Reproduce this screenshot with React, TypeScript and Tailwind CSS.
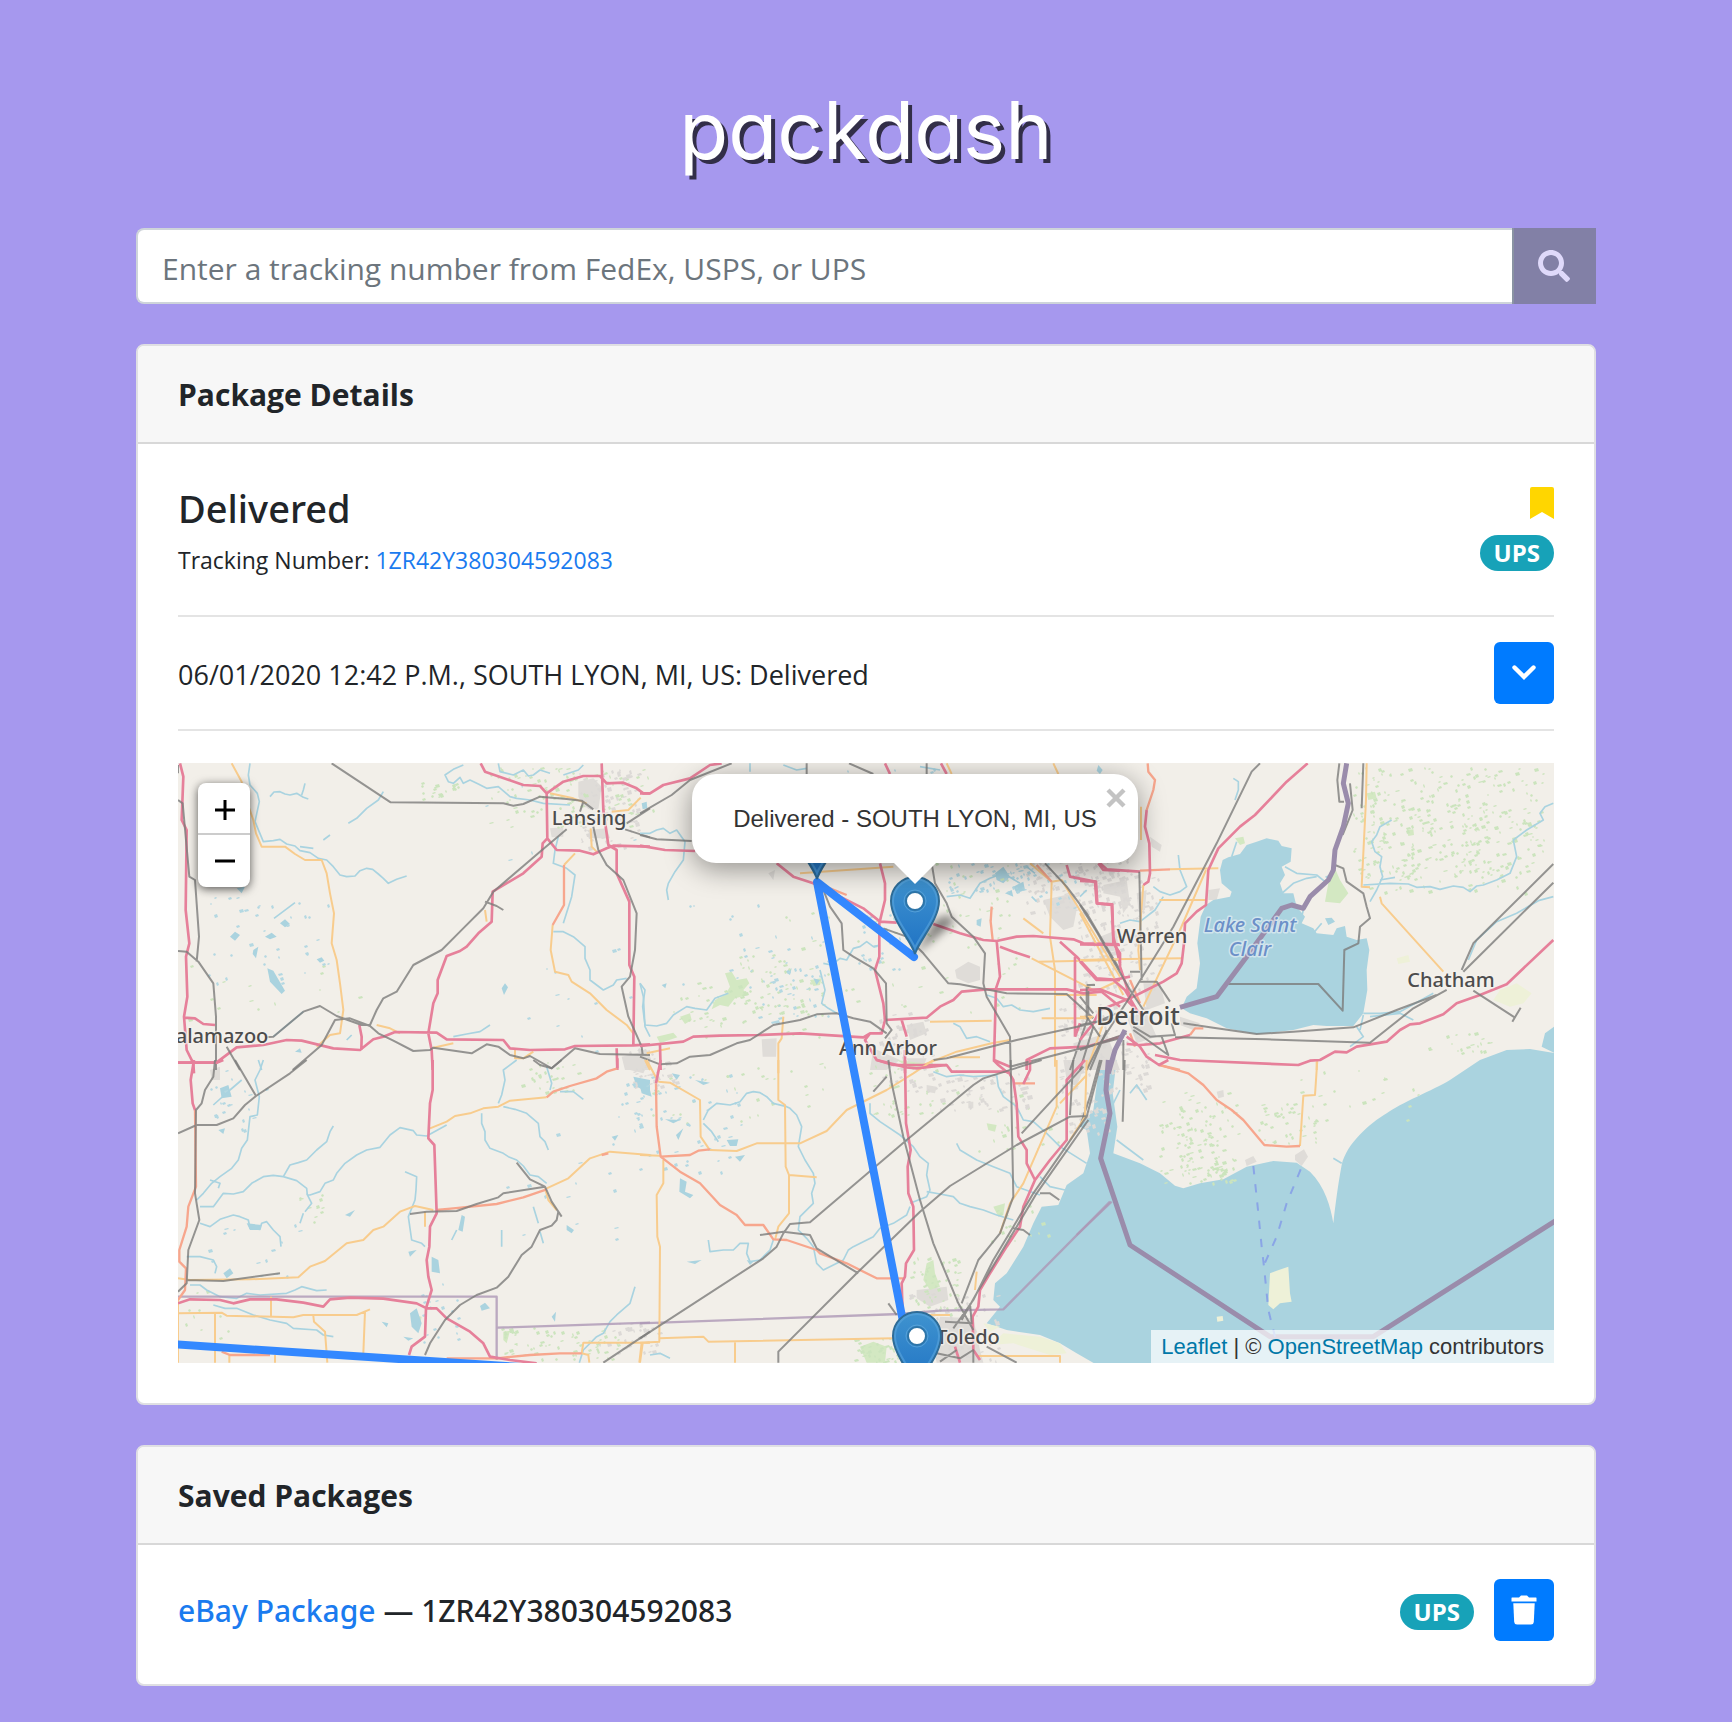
import React from "react";
import { FaSearch } from "react-icons/fa";

type Tile = {
  id: string;
  x: number;
  y: number;
  water?: string;
  lakes?: string;
  park?: string;
  field?: string;
  urban?: string;
  river?: string;
  minor?: string;
  trunk?: string;
  motorway?: string;
  rail?: string;
  border?: string;
  nation?: string;
  ferry?: string;
};

// Each tile is drawn on a grid three times finer than the map surface.
const TILES: Tile[] = [
  {
    id: "southeast",
    x: 902,
    y: 297,
    water:
      "M60 0L40 150L0 200L20 210L30 280L10 340L-40 375L-65 435L-115 440L-140 490L-170 560L-220 640L-255 670L-260 720L-240 740L-280 790L-220 810L-120 825L-60 850L-10 880L60 920H1430V-20L1350 -33L1280 -30L1200 0L1110 60C1060 90 960 130 920 160C870 190 800 250 785 315C775 370 768 420 760 490C752 440 735 380 690 335L650 308L580 303L500 320L430 358L360 370L310 385L285 377L240 340L180 310L100 280L112 200L98 100L110 0ZM1422 -100L1395 -80L1385 -40L1422 -22Z",
    field: "M570 640L590 632L625 620L630 700L635 725L600 730L580 748L565 735ZM410 770L428 768L430 782L412 785Z",
    urban: "M495 300L520 288L530 305L500 318ZM645 285L672 268L684 290L665 318L645 300ZM410 95L430 90L432 110L415 115Z",
    river: "M150 100L170 75L200 120M110 240L150 270L190 300M120 90L100 130M760 295L785 310",
    minor: "M660 258L670 107L705 105L712 0",
    trunk: "M240 15L325 40L370 75L410 120L455 150L490 180L553 255L620 260L660 258",
    rail: "M134 0L128 185M60 0L30 110L0 200",
    border: "M-10 525L95 425",
    nation: "M85 0L78 90L90 160L62 295L150 555L570 830H880L1430 480",
    ferry: "M520 318L533 440L545 560L552 620L565 750L585 830M662 328L620 430L590 530L552 615",
  },
  {
    id: "northwest",
    x: -8,
    y: -13,
    lakes:
      "M292 655L310 662L345 722L335 732L300 695ZM330 520L345 508L360 522L345 532ZM180 560L195 545L210 555L195 572ZM285 560L305 548L320 560L300 568ZM440 628L455 622L463 632L450 638ZM995 715L1005 700L1014 712L1002 735ZM200 415L225 410L215 430ZM250 600L265 590L258 625L248 612ZM375 905L390 895L395 908Z",
    urban:
      "M1225 95L1270 85L1295 110L1285 180L1240 170L1225 140ZM1140 235L1180 232L1180 260L1145 262ZM1250 240L1310 235L1320 265L1270 265ZM1355 920L1440 900L1440 960H1365Z",
    river:
      "M240 40L235 75L240 105L262 130L268 155L255 215L280 275L310 272L330 268L350 282L375 288L390 302L420 308L445 325L470 330L490 350L510 375L530 380L555 378L570 362L590 355L608 358L625 372L640 385L655 400L680 388L710 378M300 140L312 126L330 125L345 132L360 135L380 130L400 142L415 147M405 100L400 120L395 135M640 125L625 150L590 175L560 205L535 220M880 45L850 58L825 75L835 95L850 100L870 82L880 100L900 90L925 102L950 115L985 110L1020 140L1040 145L1080 150L1120 160L1200 165M985 40L990 65L1030 75L1060 60L1075 78L1090 75L1110 60L1140 70M1180 75L1225 60L1240 45M1165 260L1155 300L1150 340L1190 355L1215 375L1205 440L1180 520M1150 545L1180 545L1210 560L1245 590L1245 625L1260 660L1260 690L1300 720L1330 705L1340 690L1370 685M1410 700L1420 740L1425 830L1440 860M312 505L375 458M310 860L400 785M850 860L890 852L930 845L960 825M460 270L480 255M390 290L430 295M530 870L545 855M265 930L275 960",
    minor:
      "M185 40L215 95L225 140L250 210L258 250L275 290L345 290L375 312L405 330L455 330L470 370L480 430L492 490L485 580L500 630L510 700L520 780L510 850L480 855L440 890M1325 185L1375 180L1412 143M1140 130L1210 145L1250 160M1148 525L1142 600L1155 665L1195 675L1205 695L1260 730L1310 780L1370 825L1390 850M1262 235L1265 290L1285 310M945 480L950 515M620 825L660 835L690 850M790 893L850 880M1215 310L1182 345M1035 900V925L1060 925L1090 905",
    trunk: "M1182 345V465L1148 525",
    motorway:
      "M30 40L40 80L35 210L50 240L47 480L58 580L48 620L52 740L42 800L50 900L70 940L72 970M42 803L75 805L100 822L135 825M24 938L140 937L200 892L280 885L350 870L395 872L490 895L570 900L610 868L640 860L675 846L800 848L830 868L1000 870L1020 895L1080 900L1185 898L1215 888L1390 886L1440 883M568 825L575 860L574 900M932 40L945 65L1060 105L1110 108L1130 130L1180 95L1240 78L1290 78L1310 100L1360 98L1400 115L1420 130L1440 130M1130 130L1132 265L1160 300L1230 302L1270 313L1310 295L1330 287L1440 290M1295 40L1300 180L1315 285L1340 300L1340 370L1378 455L1378 645L1393 680L1390 886M1132 265L1118 280L1115 320L1060 370L968 425L965 515L925 550L890 590L870 603L830 618L803 690L803 730L790 760L775 850L785 900L788 960M1340 895L1342 960",
    rail:
      "M485 40L662 157L1000 160L1030 167L1060 162L1110 140L1190 147L1235 152L1270 178M1270 230L1285 300L1310 345L1360 390L1400 490L1395 600L1380 680L1355 710L1375 800L1415 890L1418 915M1190 238L1110 305L1075 335L970 425L940 475L870 545L815 600L730 645L680 725L640 745L620 780L600 825L575 825L500 798L450 768L400 785L310 860L285 862M945 455L980 468L1000 480M24 45V70M24 150L38 160L58 380L75 390L87 560L80 635M24 603L50 605L85 635L130 700L138 800L138 960M170 890L210 960M368 960L455 885L495 810L540 805L600 828L625 850L670 872L730 903L780 900L790 893L905 910L950 883L985 890L1020 915L1060 925L1080 918L1145 955L1215 895L1290 912L1440 915M1440 175L1370 220M1365 238L1440 262M1240 155L1230 185",
  },
  {
    id: "north",
    x: 462,
    y: -13,
    lakes:
      "M1065 370L1090 350L1110 380L1090 400L1070 390ZM1120 410L1150 395L1155 420L1130 430ZM1095 430L1115 420L1120 440ZM5 160L20 155L22 175L8 178ZM65 705L80 700L76 715ZM435 665L455 655L450 675ZM1010 510L1025 505L1022 530L1010 525ZM1375 45L1388 60L1380 72L1370 62ZM520 685L540 690L530 705Z",
    park: "M255 670L275 665L290 690L320 685L328 700L310 720L325 735L285 745L265 770L240 765L215 778L225 750L255 735L270 710ZM50 860L100 848L112 862L60 880ZM120 800L150 790L155 810L135 822ZM510 690L545 685L540 705L520 708Z",
    urban:
      "M365 868L410 865L408 920H368ZM945 660L985 635L1020 650L1020 690L985 700L950 685ZM1210 450L1300 430L1310 480L1300 530L1270 540L1230 500ZM800 825L850 815L860 850L810 870ZM385 370L405 360L400 390ZM700 895L780 930L740 960H690ZM1300 880L1400 850L1440 960H1310Z",
    river:
      "M0 250L30 250L50 240L70 235L90 250L110 240L135 275L130 330L105 365L85 400L80 420L85 450M0 700L15 720L8 770L15 825L50 828L80 820L100 795L140 770L165 775L200 780L225 745L265 730M540 660L555 720L545 760L565 775L590 790M920 440L960 435L990 445L1020 400L1050 385L1090 370L1115 385L1140 400M1040 735L1070 745L1090 770L1115 765L1140 780L1180 785L1230 775M550 640L575 645L600 625L620 630L640 595L660 590L680 575L700 590L720 585M940 820L960 830L980 865L1010 860L1050 875M1160 350L1185 370M330 40V65M430 45L470 60L500 55M840 50L900 60M1175 440L1190 455",
    minor:
      "M480 370L760 350M920 40L935 72M1240 40L1255 72M1170 340L1235 395L1230 560L1245 660V950M1235 395L1265 390L1440 680M1195 635L1440 630M1175 625L1370 725M870 815L1055 812M1205 805H1355M430 800L425 865L415 880V970M850 945L950 905L1055 880L1110 870M930 922H1020M20 910L90 895M1150 505L1210 550M1440 690L1375 720M1245 735H1370",
    trunk: "M1055 470L1052 515L1058 570M1190 345L1235 395M570 415L620 435",
    motorway:
      "M0 130L30 130L70 105L150 85L210 45L245 40M0 287L75 300L165 303M410 340L460 380L520 400L600 440L670 475L720 515L770 518M720 340L735 400L735 450L718 520L718 620L705 660L730 760L735 810L725 850L690 850L670 862L480 850L360 855L240 857L160 860L130 875L0 888M735 40L750 72M903 40L920 72M880 522L960 550L1030 570L1070 573L1130 560L1180 558L1300 568L1330 580L1440 583M1070 573L1080 680L1068 715L1062 930L1110 950M1080 590L1120 605L1170 622M1280 345L1290 380L1365 395L1370 460L1415 465L1420 560L1440 640M1375 340L1390 360L1440 362M1260 575L1310 620L1370 685L1440 690M1305 620V860M735 810L860 803L900 770L940 750L965 725L1040 718L1280 718L1330 730L1385 725L1440 770M690 850L675 870L710 930L760 945L800 945L920 945M785 810L800 860M795 900V970M60 885L62 960M1305 860L1320 820M1440 860L1340 890L1230 895L1160 930V960",
    rail:
      "M0 190L95 135L150 90L275 40M500 40V72M627 40L700 72M860 40V72M0 255L50 268L155 273M875 340L885 400L920 460L935 500L1000 560L1035 610L1030 700L1040 740L1110 860L1112 960M1215 340L1280 410L1340 490L1440 660M550 420L570 470L605 520L610 600L640 620L700 655L738 700L740 820L755 840L735 865M730 535L800 560L850 610L925 700L960 703L1100 730L1280 732L1360 805M0 920L60 943L110 940L150 920L210 915L290 880L330 870L400 825L480 810L530 793L590 790L640 805L690 815L740 850M880 930L920 925L1130 870L1360 820L1430 790M1110 950L1440 865M1340 705H1365M1345 710V800L1290 960M1360 830L1320 960M1400 840L1350 960",
  },
  {
    id: "northeast",
    x: 902,
    y: -13,
    water:
      "M420 360L428 330L445 322L480 312L500 285L530 275L560 265L595 272L605 288L635 295L632 335L605 350L615 375L600 400L610 430L640 430L650 470L675 500L665 520L700 535L710 550L760 555L770 535L795 528L800 560L830 570L860 565L868 600L860 660L862 720L850 790L820 828L740 828L700 825L640 840L530 853L440 835L380 805L330 790L305 775L320 740L350 715L360 640L352 580L362 500L378 465L400 450L450 440L455 425L425 400ZM735 505L755 503L765 515L745 525ZM735 380L755 370L750 395Z",
    park: "M745 400L765 355L780 390L805 430L780 460L735 455ZM860 130L885 125L890 145L865 150ZM465 265L490 260L495 280L480 285ZM980 240L1000 238L1002 255L985 258Z",
    field: "M1260 720L1310 700L1355 730L1330 760L1290 770L1240 750ZM950 625L985 615L990 635L955 642Z",
    urban:
      "M70 405L140 390L150 460L130 490L120 440L70 430ZM170 430L200 420L195 480H175ZM60 560L110 540L115 600L60 610ZM190 700L240 700L255 760L200 780ZM385 420L420 415L410 450H385ZM140 800L200 790L230 860L170 880ZM300 800L360 820L340 840L300 825ZM210 260L245 285L240 305L215 290Z",
    river:
      "M460 85L475 95L475 120L465 150M615 350L650 370L710 375L735 395M935 210L900 230L890 255L875 275L885 305L905 320L900 350L908 380L890 420L870 455M850 405L930 400L985 402L1010 412L1050 410L1080 418L1120 408L1150 412L1170 425L1190 408L1210 405L1250 390L1290 370L1310 320L1300 270L1340 240L1390 210L1380 190L1395 170L1420 160M1420 440L1375 452L1310 490L1250 515L1190 570L1165 630M850 790L900 790L960 785L1060 730M220 410L240 425L270 435L300 425L320 410L300 360L295 315M120 520L150 510L180 515L225 480L250 440M600 435L640 400L680 385L710 380M830 830L850 860L810 890M850 795L840 840M900 390L945 382M870 800L960 790L1000 810M670 480L660 520M725 520L700 550M470 275L455 320M0 440L20 420",
    minor:
      "M860 40L858 150L845 410L870 412M900 440L905 460L1090 665M270 358L415 355M238 450H375M378 360L300 540L190 770M190 405L175 600L180 660M0 490L130 735M0 630L90 628L305 625M183 170V270M710 935V960M0 800H40M70 820L20 960",
    trunk: "M203 40L205 65L225 90L220 120L200 180M180 362L270 358M330 855L345 835L370 835M150 850L165 890M237 945L300 960M150 690L180 760",
    motorway:
      "M683 40L620 95L525 195L480 230L415 295L385 360L378 465L350 485L315 520L312 580L305 640L290 670L250 695L200 720L150 745M60 340L80 358L180 365M200 180L195 230L208 280L210 370L205 395L190 405M0 393L48 395L52 460L97 463L100 580L120 610L120 650L150 740M0 583L120 585M0 635L50 690L100 690L135 720L170 780M150 680L100 690M0 720L60 718L140 750L190 800M225 915L300 930L655 945L690 932L720 930L765 905L800 907L830 890L920 875L960 840L990 823L1020 820L1090 793L1130 760L1200 735L1280 703L1325 660L1420 570M140 882L180 885L240 880L330 855M140 860L180 890L200 920L237 945L265 930M0 870L40 820L60 780L150 745",
    rail:
      "M540 40L515 65L410 280L280 530L150 740L60 880L20 960M0 465L50 545L150 720L190 780M178 365L185 690M150 665H180M180 695L230 695L260 740L270 755M1420 342L1180 580L1145 660M1420 398L1150 665M1180 722L1305 803M1297 815L1322 773M310 820L400 833L530 852L640 845L820 832L950 780L1070 735M285 862L560 868L870 878L1000 775L1100 720M160 830L210 860L285 855L275 820M245 860L265 915L160 840M778 40L772 90L778 155H792M850 40L845 175M810 100L818 180L788 255M440 702H715L788 782L793 600L835 580L840 530L870 505L860 470L850 430L800 395L790 355L765 345M140 850L0 900M0 825L100 805M130 870L130 960M20 710V800L60 860M0 740L40 790",
    nation:
      "M800 40L790 100L805 160L790 230L765 300L760 360L745 390L690 440L670 475L635 465L605 475L580 510L500 620L410 740L300 772M135 840L105 900L85 970",
  },
  {
    id: "southwest",
    x: -8,
    y: 297,
    lakes:
      "M150 85L175 75L185 110L155 115ZM785 590L805 600L810 640L785 635ZM720 760L740 745L755 790L745 820L725 800ZM930 738L945 728L960 745L935 752ZM875 465L885 470L878 515L865 510ZM1190 495L1212 510L1205 520L1190 510ZM525 465L555 450L540 470ZM160 640L180 625L190 640L170 655ZM145 210L165 205L160 222ZM715 575L740 570L720 590ZM1145 770L1158 755L1155 785ZM635 785L655 790L650 802ZM230 490L275 495L270 510H240ZM1390 50L1440 60V100L1400 80ZM1325 230L1345 225L1335 242ZM700 830L730 835L715 842Z",
    urban: "M1365 0H1440L1420 40L1380 30ZM120 30L150 20V60L125 60Z",
    park: "M730 765L755 770L750 795L735 790ZM1000 815L1020 812L1010 850L1000 840Z",
    river:
      "M280 0L270 30L255 60L268 110L262 165L240 170L232 240L215 265L205 300L185 325L150 350L125 370L100 400L80 420M90 440L130 440L160 400L190 402L220 395L245 370L280 350L310 346L340 350L380 362L410 385L412 405L420 405L450 395L465 370L490 360L500 340L525 310L560 285L590 270L630 262L660 225L690 203L730 212L740 225L770 228L830 195M340 350L360 315L385 308L410 300L440 270L470 245L480 215L490 198M90 490L120 500L150 478L190 465L210 470L235 480L240 505L270 508L275 490L290 485L310 510L330 530L333 560M50 590L90 590L130 600L140 620L135 640M60 675L90 675L110 690L150 710L200 715L230 700L270 705L350 700L375 690L395 680L440 692L470 690M120 360L150 370L145 385M705 335L740 350L738 390L735 420L715 470L725 540L755 550L765 560M935 160L935 190L945 215L945 240L960 265L1000 280L1015 290L1040 300L1060 318L1080 345L1105 350L1130 370M1000 140L1035 148L1070 160L1105 190L1110 230L1125 245L1135 270M985 130L995 105L1005 60L1000 30L1040 0M1130 20L1145 70L1140 90M1170 95L1210 95L1240 118M130 735L165 745L200 745L250 765L300 780L350 790L370 805L440 810L460 825L490 830M1395 680L1380 730L1340 765L1320 785L1300 820L1280 830L1240 870L1228 908M410 400L425 430L405 455M400 460L390 490M845 540L860 510M1090 440L1105 490M995 510V560M1110 515L1120 550M215 60L180 90L130 135",
    minor:
      "M24 655L60 660L240 658L385 652L420 620L465 603L530 550L580 540L610 510L640 500L690 455L735 438L790 450M765 455V500M1130 385L1195 355L1260 295L1320 275L1440 285M24 760L155 758L170 767L370 772L400 765L560 765L600 748M135 758V908M303 710V770M430 768L432 785L465 815L472 908M585 755L580 880M315 885V908M178 885V908M1440 848H1240L1235 880L1255 885L1258 908M1415 848L1408 908M1125 385L1135 420L1160 450M1130 112L1020 122L985 140L940 145L900 160L855 168L830 185L780 205M1425 0L1440 30M24 720V908",
    trunk:
      "M75 150L78 380L55 440L50 500L28 570L28 605L48 625L45 690L24 720M1342 25L1310 35L1280 55L1200 78L1150 95L1130 112M800 450L850 445L980 432L1060 412L1130 388M155 875L180 885L300 885M830 895L980 895L1080 885L1170 880H1235M1295 285L1315 280",
    motorway:
      "M72 0L62 60L68 130L75 150M24 8L140 8L160 0M788 0V90L780 130L775 235L793 255L800 460L780 500L778 560L770 600L775 650L785 690L768 745L765 830L725 860L717 885M24 730L60 718L150 720L190 730L240 718L320 718L400 728L460 740L480 718L540 713L640 716L740 730L770 745L800 745L830 775L900 815L940 850L960 890L1020 900L1100 910M1342 -5V25",
    rail:
      "M195 0L258 108M410 0L360 40L258 108L225 135L190 175L140 195H80L24 220M135 0L130 50L105 90L95 130L78 150L75 400L88 480L55 570L50 670L24 695M50 660L160 663L330 640M720 462L770 455L860 453L920 432L985 412L1000 400L1125 380L1145 425L1165 455L1160 480L1145 497L1110 510L1085 560L1055 585L1015 650L980 683L920 705L870 735L825 780L780 850L765 885M1165 455L1175 470M1040 308L1080 358L1125 380M1090 0L1110 15L1145 25L1175 0M1440 815L1300 908",
    border: "M24 710H980V900M982 803L1440 788",
  },
  {
    id: "south",
    x: 462,
    y: 297,
    lakes:
      "M120 355L140 365L135 395L160 405L150 415L118 395ZM260 240L295 238L290 258H270ZM285 290L315 285L300 305ZM75 178L120 180L100 190ZM130 205L115 240L108 225ZM140 605L185 600L165 612ZM95 40L120 45L110 60ZM165 60L210 68L190 75ZM0 80L30 90L35 110L5 100ZM320 600L340 605L330 615Z",
    park: "M860 610L880 600L885 640L900 680L870 690L850 660ZM660 860L700 845L740 860L735 908H680ZM770 0L850 10L820 30ZM1040 190L1070 195L1065 215L1045 210ZM1060 440L1095 430L1090 465L1075 470Z",
    field: "M1090 820L1200 830L1260 850L1280 880L1230 885L1120 850L1050 855ZM1030 790L1080 800L1050 815Z",
    urban:
      "M830 690L920 680L925 720L870 740L830 715ZM900 770L1000 775L1020 870L1030 908H890L880 860ZM1270 0H1340L1310 80L1280 60ZM860 75L890 80L885 100L860 95ZM985 125H1000V145H985ZM800 -5H860L850 20L810 20Z",
    river:
      "M190 180L205 150L230 130L270 135L300 125L320 100L340 95L360 98L380 110L400 130L440 140L450 145L470 165L485 200L475 260L495 300L520 340L525 370L515 400L520 430L480 470L475 510L500 535L520 560L530 610L550 630L610 600L625 570L640 560L670 545L700 530L720 505L760 490L800 465L810 440M190 190L215 215L235 245M205 540L210 575L250 570L280 570L300 550L325 550L320 580L330 605L360 600L390 570L400 540M690 130L690 160L720 185L780 225L820 260L840 290L865 310L860 345L870 390L860 410L810 430M860 395L900 402L940 410L960 430L990 440L1030 450L1070 465L1120 480M880 35L920 50L960 45L1000 50L1070 45L1075 80L1090 110L1130 140L1150 180L1180 185L1220 220L1260 260L1340 310M950 250L960 270L1010 300L1060 320L1110 340L1130 380L1200 405M1200 350L1230 380L1275 390M30 885L60 880L90 895",
    minor:
      "M415 0V120L435 135L437 320L447 345L447 460L415 500L405 540M447 345L530 352M0 285L60 287M70 300V370L50 405L52 530L60 560L58 845M0 848L60 845M60 835L190 830L205 845L760 835M285 845V908M210 270L290 273L350 250H480L560 213L620 150L740 90L820 40L880 0M55 65L90 68L180 120L182 230L208 268M1250 0V140L1150 370L1110 430L1080 520M1340 0L1335 170L1290 240M1340 45L1260 130M800 765H930M1010 635L1005 690M1010 888H1260V908M20 0L55 65M0 908L8 850",
    trunk:
      "M48 70L50 200L62 290L150 285L175 272L210 268M62 290L120 335L180 370L240 435L290 465L315 495H370L400 538L440 540L530 570L540 580L620 610L710 655H790M1125 70H1185",
    motorway:
      "M62 0L48 70M710 0L750 10L800 22L830 25L920 15L935 35H1105L1120 60L1130 130L1135 230L1160 270L1160 310L1185 360M795 0L798 190L812 270L803 320L805 400L820 440L822 570L798 610L795 650L785 670L788 760M1335 0L1280 60V240L1230 300L1185 360L1150 440L1140 500L1100 560L1050 640L1020 690L1015 740L998 770L1000 870L1020 900M1060 0L1075 15L1105 40M1170 0V30L1150 72M945 860L960 908",
    rail:
      "M1385 0L1340 170L1180 400L1120 500L1060 600L1000 720L940 805M1345 180L1190 400L1130 500L1010 700L965 780M1205 0L1030 55L1000 75L800 240L510 487L450 492L430 520L410 560L370 595L0 835M1330 20L1200 160L1145 220M1340 168L1290 170L1130 255L930 378L840 455L650 640L415 875V908M745 0L755 70L790 230L840 420L880 550L955 730L1000 810M740 50L700 95M1112 0L1120 410L1080 520L1040 570L1015 600L965 730M360 525L430 515L510 525L530 565L655 640M1200 400H1230L1258 420M1120 505L1150 510L1170 525M745 730L770 765M1300 0L1290 165M1040 860L1130 908M990 730L995 790L915 785M890 880L960 895L1000 870V908M900 905L950 870",
    border: "M0 790L780 762L900 752L1090 748L1410 425",
    nation: "",
  },
];

// [x, y, width, height, count] areas sprinkled with small specks.
type Area = [number, number, number, number, number];

const WOODS: Area[] = [
  [1175, 5, 190, 110, 260], [1180, 40, 170, 90, 120], [310, 5, 95, 60, 70], [385, 5, 90, 60, 40], [495, 215, 150, 60, 60],
  [560, 190, 50, 60, 40], [720, 80, 120, 100, 40], [980, 330, 80, 90, 80], [1000, 370, 45, 50, 60], [1080, 340, 60, 40, 40],
  [320, 565, 120, 32, 70], [730, 495, 50, 60, 60], [675, 575, 60, 25, 50], [690, 300, 90, 60, 40], [1240, 270, 80, 20, 20],
  [0, 200, 200, 60, 14], [120, 430, 30, 30, 12], [340, 300, 60, 30, 30], [470, 300, 180, 60, 30], [600, 150, 250, 100, 50],
  [800, 330, 80, 60, 22], [1120, 300, 120, 60, 20], [240, 20, 40, 20, 18], [0, 520, 60, 60, 10], [810, 440, 60, 40, 16],
];
const TOWN: Area[] = [
  [840, 70, 110, 80, 160], [900, 110, 80, 120, 150], [880, 240, 90, 90, 130], [760, 310, 90, 40, 60], [400, 5, 60, 80, 80],
  [450, 285, 50, 40, 40], [730, 530, 90, 70, 70], [700, 250, 60, 80, 60], [890, 330, 40, 40, 40], [420, 560, 60, 30, 30],
];
const PONDS: Area[] = [
  [30, 130, 120, 90, 40], [580, 170, 70, 90, 45], [640, 5, 120, 20, 8], [770, 90, 100, 40, 60], [460, 310, 110, 100, 40],
  [680, 150, 60, 60, 30], [230, 20, 240, 80, 6], [330, 180, 130, 120, 12], [20, 460, 100, 60, 14], [240, 520, 40, 60, 20],
  [320, 360, 150, 120, 16], [30, 300, 60, 70, 20], [440, 320, 60, 40, 26], [490, 140, 90, 90, 14], [840, 60, 60, 90, 30],
];

function specks(areas: Area[], seed: number, size: number): string {
  let state = seed;
  const next = () => {
    state = (state * 1103515245 + 12345) % 2147483648;
    return state / 2147483648;
  };
  const parts: string[] = [];
  for (const [x, y, w, h, count] of areas) {
    for (let i = 0; i < count; i += 1) {
      const px = Math.round(x + next() * w);
      const py = Math.round(y + next() * h);
      const sw = 1 + Math.round(next() * size);
      const sh = 1 + Math.round(next() * (size - 1));
      parts.push(`M${px} ${py}l${sw} ${-1}l1 ${sh}l${-sw} 1Z`);
    }
  }
  return parts.join("");
}

const WOOD_SPECKS = specks(WOODS, 7, 3);
const TOWN_SPECKS = specks(TOWN, 19, 4);
const POND_SPECKS = specks(PONDS, 41, 3);

const LABELS = [
  { text: "Lansing", x: 411, y: 62, size: 20 },
  { text: "Warren", x: 974, y: 180, size: 20 },
  { text: "Chatham", x: 1273, y: 224, size: 20 },
  { text: "Detroit", x: 960, y: 262, size: 25 },
  { text: "Ann Arbor", x: 710, y: 292, size: 20 },
  { text: "alamazoo", x: 44, y: 280, size: 20 },
  { text: "Toledo", x: 790, y: 581, size: 20 },
];

function TileLayer({ layer }: { layer: "ground" | "lines" }) {
  return (
    <>
      {TILES.map((t) => (
        <g key={t.id} transform={`translate(${t.x} ${t.y}) scale(0.33333)`}>
          {layer === "ground" ? (
            <>
              <path d={t.urban} fill="#dfdcd8" />
              <path d={t.park} fill="#d3e8c2" />
              <path d={t.water} fill="#aad3df" />
              <path d={t.lakes} fill="#aad3df" />
              <path d={t.field} fill="#eef1d8" />
            </>
          ) : (
            <g fill="none" strokeLinejoin="round">
              <path d={t.river} stroke="#a9d3e0" strokeWidth={5} />
              <path d={t.border} stroke="#ac97b5" strokeOpacity={0.8} strokeWidth={7} />
              <path d={t.minor} stroke="#f8cc8d" strokeWidth={6} />
              <path d={t.trunk} stroke="#f7a68d" strokeWidth={7} />
              <path d={t.motorway} stroke="#e6809a" strokeWidth={8} />
              <path d={t.rail} stroke="#7c7c7a" strokeOpacity={0.8} strokeWidth={6} />
              <path d={t.nation} stroke="#9a8cab" strokeWidth={15} />
              <path d={t.ferry} stroke="#8aa5e6" strokeWidth={6} strokeDasharray="25 30" />
            </g>
          )}
        </g>
      ))}
    </>
  );
}

function Pin({ x, y }: { x: number; y: number }) {
  return (
    <g transform={`translate(${x} ${y})`}>
      <path
        d="M0 0C-3 -12 -24 -34 -24 -53A24 24 0 0 1 24 -53C24 -34 3 -12 0 0Z"
        fill="url(#pinFill)"
        stroke="#2e6c97"
        strokeWidth={2}
      />
      <path
        d="M0 -6C-4 -17 -22 -36 -22 -53A22 22 0 0 1 22 -53C22 -36 4 -17 0 -6Z"
        fill="none"
        stroke="#5aa5dc"
        strokeOpacity={0.6}
        strokeWidth={2}
      />
      <circle cy={-53} r={9} fill="#fff" stroke="#2e75a8" strokeWidth={2} />
      <circle cy={-53} r={11} fill="none" stroke="#6bb0e0" strokeOpacity={0.6} strokeWidth={1} />
    </g>
  );
}

function MapDrawing() {
  return (
    <svg
      viewBox="0 0 1376 600"
      preserveAspectRatio="xMidYMid slice"
      className="block h-full w-full bg-[#f2efe9]"
      role="img"
      aria-label="Map of the package route"
    >
      <defs>
        <linearGradient id="pinFill" x1="0" y1="0" x2="0" y2="1">
          <stop offset="0" stopColor="#3f93cf" />
          <stop offset="1" stopColor="#1f72c4" />
        </linearGradient>
        <filter id="soft" x="-50%" y="-50%" width="200%" height="200%">
          <feGaussianBlur stdDeviation="4" />
        </filter>
      </defs>
      <TileLayer layer="ground" />
      <path d={WOOD_SPECKS} fill="#cbe4bd" />
      <path d={TOWN_SPECKS} fill="#dcd9d6" />
      <path d={POND_SPECKS} fill="#b4d8e2" />
      <TileLayer layer="lines" />
      <g
        fontFamily="'Noto Sans', sans-serif"
        fontWeight={500}
        textAnchor="middle"
        paintOrder="stroke"
        strokeLinejoin="round"
      >
        {LABELS.map((l) => (
          <text key={l.text} x={l.x} y={l.y} fontSize={l.size} fill="#4c4c4c" stroke="#f6f3ee" strokeOpacity={0.7} strokeWidth={3}>
            {l.text}
          </text>
        ))}
        <g fontStyle="italic" fontSize={20} fill="#6c90c8" stroke="#e4eef4" strokeOpacity={0.7} strokeWidth={3}>
          <text x={1072} y={169}>Lake Saint</text>
          <text x={1072} y={193}>Clair</text>
        </g>
      </g>
      <path
        d="M736 194L639 119L739 630L-8 581"
        fill="none"
        stroke="#3388ff"
        strokeWidth={8}
        strokeLinecap="round"
        strokeLinejoin="round"
      />
      <path d="M737 192L756 158Q774 146 776 160Z" fill="#000" fillOpacity={0.45} filter="url(#soft)" />
      <Pin x={639} y={116} />
      <Pin x={737} y={191} />
      <Pin x={739} y={626} />
    </svg>
  );
}

function Badge() {
  return (
    <span className="flex h-9 items-center rounded-full bg-[#17a2b8] px-[14px] text-2xl leading-9 font-bold text-white">
      UPS
    </span>
  );
}

function Card({ title, children }: { title: string; children: React.ReactNode }) {
  return (
    <section className="overflow-hidden rounded-lg border-2 border-[#dfdfe3] bg-white">
      <h2 className="flex h-[98px] items-center border-b-2 border-[#d8d8d8] bg-[#f7f7f7] px-10 text-[30px] font-bold">
        {title}
      </h2>
      {children}
    </section>
  );
}

export default function App() {
  return (
    <div className="min-h-screen bg-[#a698ee] px-9 pb-9 font-['Open_Sans',sans-serif] text-[#212529]">
      <main className="mx-auto flex max-w-[1460px] flex-col">
        <h1 className="flex h-[228px] items-center justify-center pt-8 font-['Inter',sans-serif] text-[80px] leading-none text-white [font-feature-settings:'cv11'] [text-shadow:4px_4px_0_#322e48]">
          packdash
        </h1>

        <form className="flex h-[76px]" onSubmit={(e) => e.preventDefault()}>
          <input
            type="text"
            aria-label="Tracking number"
            placeholder="Enter a tracking number from FedEx, USPS, or UPS"
            className="min-w-0 flex-1 rounded-l-lg border-2 border-r-0 border-[#ced4da] bg-white px-6 pt-1 text-[30px] outline-none placeholder:text-[#6c757d]"
          />
          <button
            type="submit"
            aria-label="Search"
            className="flex w-[84px] items-center justify-center border-l-2 border-[#8a93a3] bg-[#8280a6] pr-[2px] text-[#dfd9fa]"
          >
            <FaSearch size={32} />
          </button>
        </form>

        <div className="mt-10 flex flex-col gap-10">
          <Card title="Package Details">
            <div className="px-10 pb-10">
              <div className="flex items-start justify-between border-b-2 border-[#e4e4e4] pt-9 pb-[31px]">
                <div>
                  <h3 className="font-['Noto_Sans',sans-serif] text-[38px] leading-[56px] font-medium">Delivered</h3>
                  <p className="text-[23px] leading-[48px]">
                    Tracking Number:{" "}
                    <a href="#tracking" className="text-[#1a7bef]">
                      1ZR42Y380304592083
                    </a>
                  </p>
                </div>
                <div className="flex flex-col items-end gap-4 pt-[7px]">
                  <button type="button" aria-label="Remove bookmark" className="block">
                    <svg width="24" height="32" viewBox="0 0 24 32" fill="#ffd600">
                      <path d="M2 0H22Q24 0 24 2V32L12 25L0 32V2Q0 0 2 0Z" />
                    </svg>
                  </button>
                  <Badge />
                </div>
              </div>

              <div className="flex items-center justify-between border-b-2 border-[#e4e4e4] py-[25px]">
                <p className="pt-1 text-[27px]">06/01/2020 12:42 P.M., SOUTH LYON, MI, US: Delivered</p>
                <button
                  type="button"
                  aria-label="Show history"
                  className="flex h-[62px] w-[60px] items-center justify-center rounded-md bg-[#007bff]"
                >
                  <svg width="24" height="16" viewBox="0 0 24 16" fill="none">
                    <path d="M2.5 2.5L12 11.8L21.5 2.5" stroke="#fff" strokeWidth="4.4" strokeLinecap="round" />
                  </svg>
                </button>
              </div>

              <div className="relative mt-8 h-[600px] overflow-hidden font-['Liberation_Sans',sans-serif]">
                <MapDrawing />

                <div className="absolute top-5 left-5 w-[52px] overflow-hidden rounded-lg bg-white text-black shadow-[0_2px_10px_rgba(0,0,0,0.65)]">
                  <button
                    type="button"
                    aria-label="Zoom in"
                    className="flex h-[52px] w-full items-center justify-center border-b-2 border-[#ccc] pt-1 pl-[2px]"
                  >
                    <svg width="20" height="20" viewBox="0 0 20 20" stroke="#000" strokeWidth="3">
                      <path d="M0 10H20M10 0V20" />
                    </svg>
                  </button>
                  <button
                    type="button"
                    aria-label="Zoom out"
                    className="flex h-[52px] w-full items-center justify-center pl-[2px]"
                  >
                    <svg width="20" height="20" viewBox="0 0 20 20" stroke="#000" strokeWidth="3">
                      <path d="M0 10H20" />
                    </svg>
                  </button>
                </div>

                <div className="absolute top-[11px] left-[calc(50%+49px)] -translate-x-1/2">
                  <div className="flex h-[89px] w-[446px] items-center justify-center rounded-3xl bg-white text-2xl whitespace-nowrap text-[#333] shadow-[0_6px_28px_rgba(0,0,0,0.4)]">
                    Delivered - SOUTH LYON, MI, US
                  </div>
                  <svg width="42" height="21" viewBox="0 0 42 21" className="mx-auto block" fill="#fff">
                    <path d="M0 0H42L21 21Z" />
                  </svg>
                  <button type="button" aria-label="Close popup" className="absolute top-[14px] right-3">
                    <svg width="20" height="20" viewBox="0 0 20 20" stroke="#c3c3c3" strokeWidth="4.4">
                      <path d="M2 2L18 18M18 2L2 18" />
                    </svg>
                  </button>
                </div>

                <div className="absolute right-0 bottom-0 bg-white/70 px-[10px] text-[22px] leading-[33px] whitespace-nowrap text-[#333]">
                  <a href="#leaflet" className="text-[#0078a8]">
                    Leaflet
                  </a>{" "}
                  | ©{" "}
                  <a href="#openstreetmap" className="text-[#0078a8]">
                    OpenStreetMap
                  </a>{" "}
                  contributors
                </div>
              </div>
            </div>
          </Card>

          <Card title="Saved Packages">
            <div className="flex items-center justify-between px-10 pt-[34px] pb-[43px]">
              <h3 className="font-['Noto_Sans',sans-serif] text-[30px] font-medium">
                <a href="#package" className="text-[#1a7bef]">
                  eBay Package
                </a>{" "}
                — 1ZR42Y380304592083
              </h3>
              <div className="flex items-center gap-5">
                <div className="pt-1">
                  <Badge />
                </div>
                <button
                  type="button"
                  aria-label="Delete package"
                  className="flex h-[62px] w-[60px] items-center justify-center rounded-md bg-[#007bff]"
                >
                  <svg width="26" height="30" viewBox="0 0 26 30" fill="#fff">
                    <path d="M1 2.500H8L10 0.500H16L18 2.500H25Q25.500 2.500 25.500 3V6.500H0.500V3Q0.500 2.500 1 2.500Z" />
                    <path d="M2.300 8.300H23.700L22.800 27Q22.600 29.500 20 29.500H6Q3.400 29.500 3.200 27Z" />
                  </svg>
                </button>
              </div>
            </div>
          </Card>
        </div>
      </main>
    </div>
  );
}
